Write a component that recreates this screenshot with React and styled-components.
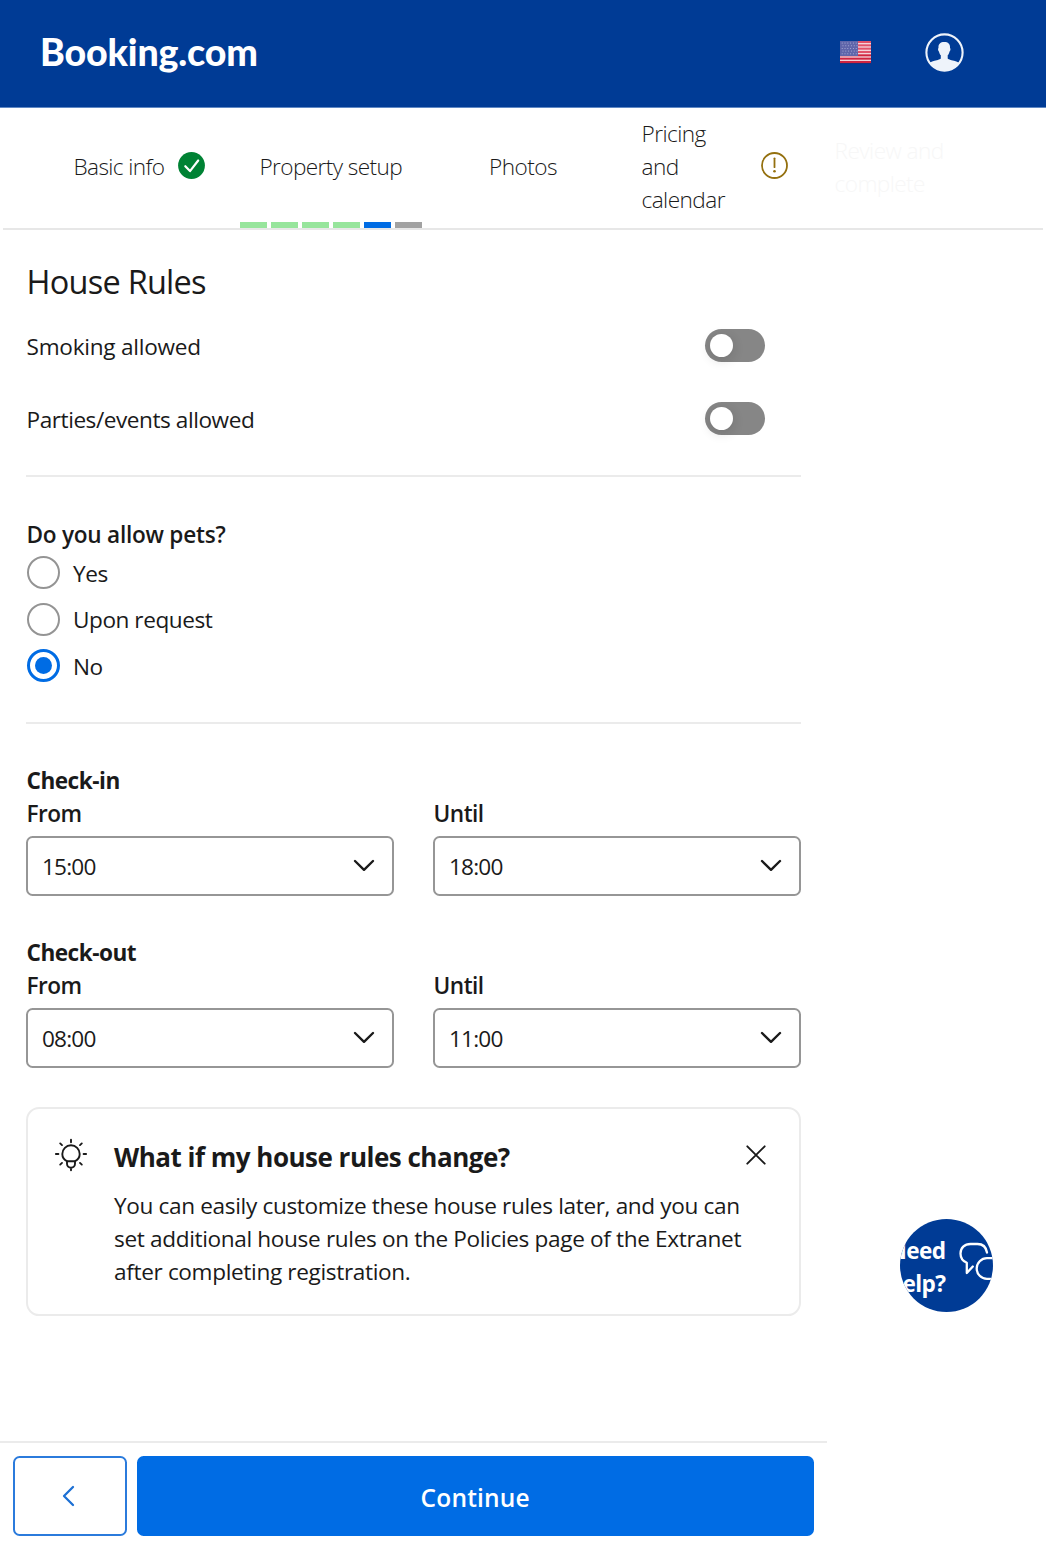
import React, { useState } from "react";
import styled, { createGlobalStyle, css } from "styled-components";

const Global = createGlobalStyle`
  *, *::before, *::after { box-sizing: border-box; }
  body {
    margin: 0;
    background: #fff;
    color: #1a1a1a;
    font-family: "Open Sans", "Noto Sans", sans-serif;
    font-size: 22.6px;
    line-height: 33px;
    letter-spacing: -0.35px;
  }
  button { font: inherit; letter-spacing: inherit; color: inherit; cursor: pointer; }
  svg { display: block; flex: none; }
`;

const Page = styled.div`
  position: relative;
  width: 1046px;
  height: 1549px;
  overflow: hidden;
  display: flex;
  flex-direction: column;
`;

const Header = styled.header`
  flex: none;
  height: 108px;
  padding: 0 82px 3px 40px;
  display: flex;
  align-items: center;
  background: #003b95;
  background-clip: padding-box;
  border-bottom: 1px solid #5f88c4;
`;

const Logo = styled.div`
  flex: 1;
  font-family: Lato, sans-serif;
  font-weight: 900;
  font-size: 37.5px;
  line-height: 44px;
  letter-spacing: -0.15px;
  color: #fff;
`;

const HeaderActions = styled.div`
  display: flex;
  align-items: center;
  gap: 54px;
`;

const Nav = styled.nav`
  flex: none;
  height: 122px;
  margin: 0 3px;
  padding-left: 51px;
  display: grid;
  grid-template-columns: 186px 182px 200px 193px 1fr;
  border-bottom: 2px solid #e7e7e7;
`;

const Tab = styled.div`
  display: flex;
  flex-direction: column;
  font-weight: 300;
  color: ${(p) => (p.$disabled ? "#f7f7f7" : "#1a1a1a")};
`;

const TabLabel = styled.div`
  height: 114px;
  display: flex;
  align-items: center;
  justify-content: ${(p) => p.$align || "flex-start"};
  gap: ${(p) => p.$gap || 13.5}px;
  padding: 3px 0 0 ${(p) => (p.$align ? 2 : 19.5)}px;
  letter-spacing: ${(p) => p.$track ?? -0.55}px;

  svg { margin-top: -2px; }
`;

const LabelText = styled.span`
  width: ${(p) => (p.$width ? `${p.$width}px` : "auto")};
`;

const Progress = styled.div`
  height: 6px;
  display: grid;
  grid-template-columns: repeat(6, 1fr);
  gap: 3.6px;
`;

const stepColors = { done: "#97e59c", current: "#006ce4", todo: "#a2a2a2" };

const Step = styled.span`
  background: ${(p) => stepColors[p.$state]};
`;

const Main = styled.main`
  flex: 1;
  width: 828px;
  padding: 30px 27px 0 26px;
  display: flex;
  flex-direction: column;
`;

const Title = styled.h1`
  margin: 0 0 25px;
  font-size: 32.5px;
  line-height: 44px;
  font-weight: 400;
  letter-spacing: -0.75px;
  padding-left: 0.5px;
`;

const ToggleList = styled.div`
  display: flex;
  flex-direction: column;
  gap: 40px;
  padding-right: 36px;
`;

const ToggleRow = styled.div`
  display: flex;
  justify-content: space-between;
  align-items: center;
  height: 33px;
  letter-spacing: ${(p) => p.$track}px;

  > span { padding: 1px 0 0 0.5px; }
`;

const Switch = styled.button`
  width: 60px;
  height: 33px;
  padding: 5px;
  border: 0;
  border-radius: 17px;
  display: flex;
  justify-content: ${(p) => (p.$on ? "flex-end" : "flex-start")};
  background: ${(p) => (p.$on ? "#006ce4" : "#868686")};
`;

const Knob = styled.span`
  width: 23px;
  height: 23px;
  border-radius: 50%;
  background: #fff;
  box-shadow: 0 3px 12px rgba(26, 26, 26, 0.16);
`;

const Divider = styled.hr`
  width: 100%;
  height: 2px;
  margin: 40px 0 41px;
  border: 0;
  background: #ebebeb;
`;

const Heading = styled.h2`
  margin: 0;
  font-size: 22.6px;
  line-height: 33px;
  font-weight: ${(p) => p.$weight || 700};
  letter-spacing: ${(p) => p.$track ?? -0.5}px;
  padding-left: 0.5px;
`;

const RadioList = styled.div`
  display: flex;
  flex-direction: column;
  gap: 13.5px;
  margin-top: 5px;
`;

const RadioRow = styled.label`
  display: flex;
  align-items: center;
  gap: 13.5px;
  height: 33px;
  padding-left: 0.5px;
  letter-spacing: -0.45px;
`;

const RadioLabel = styled.span`
  padding-top: 1.5px;
`;

const RadioMark = styled.span`
  width: 33px;
  height: 33px;
  border-radius: 50%;
  display: grid;
  place-items: center;
  border: 2px solid #949494;
  ${(p) =>
    p.$checked &&
    css`
      border: 3px solid #006ce4;
      &::after {
        content: "";
        width: 17px;
        height: 17px;
        border-radius: 50%;
        background: #006ce4;
      }
    `}
`;

const TimeList = styled.div`
  display: flex;
  flex-direction: column;
  gap: 40px;
  margin-top: -1px;
`;

const TimeGroup = styled.section``;

const TimeColumns = styled.div`
  display: grid;
  grid-template-columns: 1fr 1fr;
  gap: 39px;
`;

const FieldLabel = styled.div`
  margin-bottom: 6px;
  padding-left: 0.5px;
  font-weight: 600;
  letter-spacing: -0.5px;
`;

const Select = styled.button`
  width: 100%;
  height: 60px;
  padding: 1px 17px 0 14px;
  display: flex;
  align-items: center;
  justify-content: space-between;
  background: #fff;
  border: 2px solid #969696;
  border-radius: 6.6px;
  letter-spacing: -0.8px;

  svg { margin-top: -1px; }
`;

const Tip = styled.aside`
  flex: none;
  margin-top: 39px;
  height: 209px;
  padding: 29px 26px 0 26px;
  display: grid;
  grid-template-columns: 34px minmax(0, 1fr) 34px;
  column-gap: 26px;
  border: 2px solid #ebebeb;
  border-radius: 13.2px;
`;

const TipTitle = styled.h3`
  margin: 3px 0 15px;
  font-size: 26px;
  line-height: 33px;
  font-weight: 700;
  letter-spacing: -0.5px;
`;

const TipText = styled.p`
  margin: 0;
  white-space: nowrap;
`;

const IconButton = styled.button`
  width: 34px;
  height: 34px;
  padding: 0;
  display: grid;
  place-items: center;
  border: 0;
  background: none;
`;

const Footer = styled.footer`
  flex: none;
  width: 827px;
  height: 108px;
  padding: 13px 13px;
  display: grid;
  grid-template-columns: 114px 1fr;
  gap: 9.5px;
  border-top: 2px solid #ebebeb;
`;

const Button = styled.button`
  height: 80px;
  padding: ${(p) => (p.$primary ? "3px 0 0" : "0 2px 0 0")};
  display: grid;
  place-items: center;
  border: 2px solid ${(p) => (p.$primary ? "#006ce4" : "#2b7bdc")};
  border-radius: 6.6px;
  background: ${(p) => (p.$primary ? "#006ce4" : "#fff")};
  color: ${(p) => (p.$primary ? "#fff" : "#006ce4")};
  font-size: 24.5px;
  font-weight: 600;
  letter-spacing: 0.2px;
`;

const Help = styled.button`
  position: absolute;
  left: 900px;
  top: 1219px;
  width: 93px;
  height: 93px;
  padding: 0;
  overflow: hidden;
  border: 0;
  border-radius: 50%;
  background: #003b95;
  color: #fff;
  display: flex;
  align-items: center;
  justify-content: flex-end;
  gap: 13.5px;
  font-weight: 700;
  letter-spacing: -0.6px;
  text-align: right;

  svg { margin: -7px -8px 0 0; }
`;

const HelpText = styled.span`
  flex: none;
  width: 60px;
  margin-top: 3px;
`;

function Flag() {
  const stars = [];
  for (let r = 0; r < 5; r++)
    for (let c = 0; c < 6; c++)
      stars.push(<circle key={`${r}-${c}`} cx={2.2 + c * 2.8 + (r % 2) * 0.8} cy={2 + r * 2.7} r="0.5" fill="#b9bde0" />);
  return (
    <svg width="31" height="23" viewBox="0 0 31 23">
      <rect y="1" width="31" height="22" rx="0.5" fill="#1b2f7c" />
      <rect width="31" height="22" fill="#f3d3da" />
      {[0, 1, 2, 3, 4, 5, 6].map((i) => (
        <rect key={i} y={i * 3.333} width="31" height="2" fill={i > 3 ? "#cf2440" : "#e0526a"} />
      ))}
      <rect width="18" height="15" fill="#5f65aa" />
      {stars}
    </svg>
  );
}

function Avatar() {
  return (
    <svg width="39" height="39" viewBox="0 0 39 39">
      <clipPath id="avatarClip"><circle cx="19.5" cy="19.5" r="18.5" /></clipPath>
      <g clipPath="url(#avatarClip)" fill="#eef3fa">
        <path d="M19.3 9c4.300 0 6 2.400 5.700 6 .8.400.5 3-.5 3.500-.3 1.900-1 3-1.800 3.800v2.900c0 1.200 3 1.600 6.300 2.600 3.400 1.100 5.600 2.200 8.500 4.200V40H1v-8c2.900-2 5.100-3.100 8.500-4.200 3.300-1 6.300-1.400 6.300-2.600v-2.900c-.8-.8-1.500-1.900-1.800-3.800-1-.5-1.300-3.100-.5-3.500-.3-3.600 1.500-6 5.800-6z" />
      </g>
      <circle cx="19.500" cy="19.500" r="18.100" fill="none" stroke="#eef3fa" strokeWidth="2.100" />
    </svg>
  );
}

function CheckBadge() {
  return (
    <svg width="27" height="27" viewBox="0 0 27 27">
      <circle cx="13.500" cy="13.500" r="13.400" fill="#008234" />
      <path d="M7.300 14.200l4.700 4.900 8.200-10.600" fill="none" stroke="#fff" strokeWidth="2.200" strokeLinecap="round" strokeLinejoin="round" />
    </svg>
  );
}

function Warning() {
  return (
    <svg width="27" height="27" viewBox="0 0 27 27" fill="none">
      <circle cx="13.500" cy="13.500" r="12.500" stroke="#94700f" strokeWidth="1.800" />
      <path d="M13.500 6.300v8.900" stroke="#94700f" strokeWidth="1.800" strokeLinecap="round" />
      <circle cx="13.500" cy="19.200" r="1.300" fill="#94700f" />
    </svg>
  );
}

function ChevronDown() {
  return (
    <svg width="22" height="14" viewBox="0 0 22 14" fill="none" stroke="#1a1a1a" strokeWidth="2.400" strokeLinecap="round" strokeLinejoin="round">
      <path d="M2 2l9 8.800L20 2" />
    </svg>
  );
}

function ChevronLeft() {
  return (
    <svg width="16" height="24" viewBox="0 0 16 24" fill="none" stroke="#1d70d4" strokeWidth="2.300" strokeLinecap="round" strokeLinejoin="round">
      <path d="M12 3L3 12l9 9" />
    </svg>
  );
}

function Bulb() {
  return (
    <svg width="34" height="34" viewBox="0 0 34 34" fill="none" stroke="#1a1a1a" strokeWidth="1.900" strokeLinecap="round" strokeLinejoin="round">
      <path d="M13.300 23.300C10.300 22 8.300 19.200 8.300 16a8.700 8.700 0 0 1 17.400 0c0 3.200-2 6-5 7.300z" />
      <path d="M13 23.500v2.300a4 4 0 0 0 8 0v-2.300M17 30v2.300M17 1.800v2.400M1.900 16h2.500M29.600 16h2.500M6.200 5.400l1.800 1.700M27.800 5.400L26 7.100M6.200 26.600L8 24.900M27.800 26.600L26 24.900" />
    </svg>
  );
}

function Close() {
  return (
    <svg width="20" height="20" viewBox="0 0 20 20" stroke="#1a1a1a" strokeWidth="1.900" strokeLinecap="round">
      <path d="M1.300 1.300l17.400 17.400M18.700 1.300L1.300 18.700" />
    </svg>
  );
}

function Bubbles() {
  return (
    <svg width="42" height="42" viewBox="0 0 42 42" fill="none" stroke="#fff" strokeWidth="2.300" strokeLinecap="round" strokeLinejoin="round">
      <path d="M28 11.500C27 5.500 23 3 18.500 3H11.500C5.500 3 1.500 7 1.500 12.500c0 4.500 2 7.500 6.300 9.300V32l6-6.500" />
      <path d="M36 17.200h-8a10.300 10.300 0 0 0 0 20.600h3.500" />
    </svg>
  );
}

const steps = ["done", "done", "done", "done", "current", "todo"];
const pets = ["Yes", "Upon request", "No"];
const times = [
  { title: "Check-in", from: "15:00", until: "18:00" },
  { title: "Check-out", from: "08:00", until: "11:00" },
];

function Toggle({ label, track }) {
  const [on, setOn] = useState(false);
  return (
    <ToggleRow $track={track}>
      <span>{label}</span>
      <Switch $on={on} onClick={() => setOn(!on)} aria-label={label}>
        <Knob />
      </Switch>
    </ToggleRow>
  );
}

function TimeField({ label, value }) {
  return (
    <div>
      <FieldLabel>{label}</FieldLabel>
      <Select>
        {value}
        <ChevronDown />
      </Select>
    </div>
  );
}

export default function App() {
  const [pet, setPet] = useState("No");
  return (
    <>
      <Global />
      <Page>
        <Header>
          <Logo>Booking.com</Logo>
          <HeaderActions>
            <Flag />
            <Avatar />
          </HeaderActions>
        </Header>
        <Nav>
          <Tab><TabLabel $track={-0.6}>Basic info <CheckBadge /></TabLabel></Tab>
          <Tab>
            <TabLabel $track={-0.6}>Property setup</TabLabel>
            <Progress>{steps.map((s, i) => <Step key={i} $state={s} />)}</Progress>
          </Tab>
          <Tab><TabLabel $align="center">Photos</TabLabel></Tab>
          <Tab>
            <TabLabel $gap={33}>
              <LabelText $width={86}>Pricing and calendar</LabelText>
              <Warning />
            </TabLabel>
          </Tab>
          <Tab $disabled><TabLabel><LabelText $width={130}>Review and complete</LabelText></TabLabel></Tab>
        </Nav>
        <Main>
          <Title>House Rules</Title>
          <ToggleList>
            <Toggle label="Smoking allowed" track={-0.25} />
            <Toggle label="Parties/events allowed" track={-0.45} />
          </ToggleList>
          <Divider />
          <Heading $weight={600} $track={-0.25}>Do you allow pets?</Heading>
          <RadioList>
            {pets.map((p) => (
              <RadioRow key={p} onClick={() => setPet(p)}>
                <RadioMark $checked={pet === p} />
                <RadioLabel>{p}</RadioLabel>
              </RadioRow>
            ))}
          </RadioList>
          <Divider />
          <TimeList>
            {times.map((t) => (
              <TimeGroup key={t.title}>
                <Heading>{t.title}</Heading>
                <TimeColumns>
                  <TimeField label="From" value={t.from} />
                  <TimeField label="Until" value={t.until} />
                </TimeColumns>
              </TimeGroup>
            ))}
          </TimeList>
          <Tip>
            <Bulb />
            <div>
              <TipTitle>What if my house rules change?</TipTitle>
              <TipText>
                You can easily customize these house rules later, and you can<br />
                set additional house rules on the Policies page of the Extranet<br />
                after completing registration.
              </TipText>
            </div>
            <IconButton aria-label="Close"><Close /></IconButton>
          </Tip>
        </Main>
        <Footer>
          <Button aria-label="Back"><ChevronLeft /></Button>
          <Button $primary>Continue</Button>
        </Footer>
        <Help>
          <HelpText>Need help?</HelpText>
          <Bubbles />
        </Help>
      </Page>
    </>
  );
}
